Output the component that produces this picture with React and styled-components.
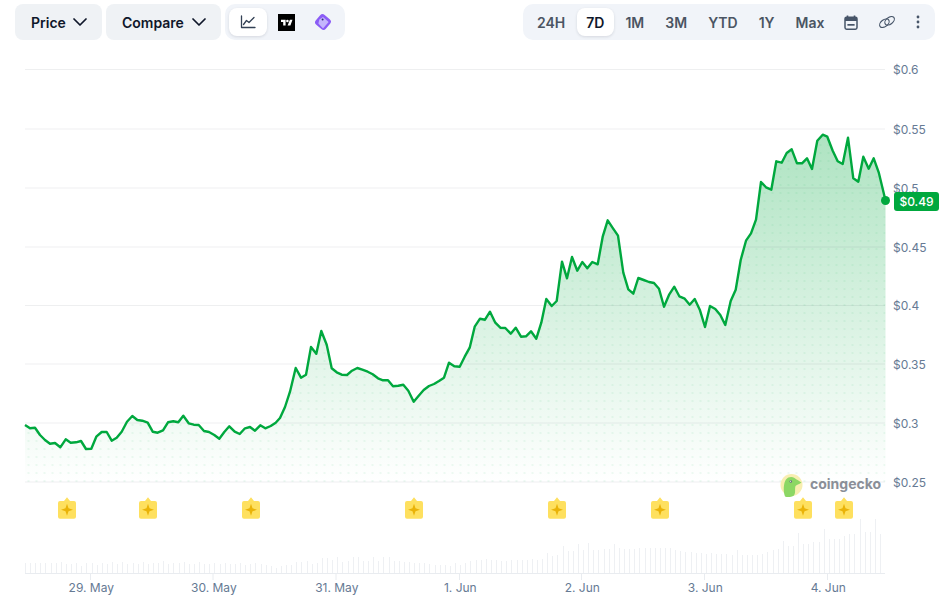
import React from "react";
import styled, { createGlobalStyle } from "styled-components";
import { ChevronDown } from "lucide-react";

const GlobalStyle = createGlobalStyle`
  html, body { margin: 0; padding: 0; background: #fff; overflow: hidden; }
  body { font-family: Inter, "Liberation Sans", sans-serif; }
`;

const Page = styled.div`
  width: 946px;
  height: 601px;
  display: flex;
  flex-direction: column;
`;

const Toolbar = styled.div`
  display: flex;
  align-items: flex-start;
  gap: 4px;
  height: 36px;
  padding: 4px 11px 4px 15px;
`;

const Dropdown = styled.button`
  display: flex;
  align-items: center;
  justify-content: space-between;
  width: ${(p) => p.$width}px;
  height: 36px;
  padding: 0 10px 0 16px;
  border: 0;
  border-radius: 8px;
  background: #eff2f5;
  color: #0f172a;
  font: 600 14px Inter, sans-serif;
`;

const Segmented = styled.div`
  display: flex;
  align-items: center;
  height: 36px;
  padding: 0 ${(p) => p.$pad}px 0 4px;
  border-radius: 10px;
  background: #f1f4f9;
  gap: ${(p) => p.$gap || 0}px;
`;

const Spacer = styled.div`
  flex: 1;
`;

const IconTab = styled.button`
  display: flex;
  align-items: center;
  justify-content: center;
  width: ${(p) => p.$width}px;
  height: 28px;
  padding: 0;
  border: 0;
  border-radius: 8px;
  background: ${(p) => (p.$active ? "#fff" : "transparent")};
  box-shadow: ${(p) => (p.$active ? "0 1px 3px rgba(15,23,42,.12)" : "none")};
`;

const RangeTabs = styled.div`
  display: flex;
  gap: 2px;
  margin-right: 1.5px;
`;

const RangeTab = styled.button`
  height: 28px;
  padding: 0 9.5px;
  border: 0;
  border-radius: 8px;
  background: ${(p) => (p.$active ? "#fff" : "transparent")};
  box-shadow: ${(p) => (p.$active ? "0 1px 3px rgba(15,23,42,.12)" : "none")};
  color: ${(p) => (p.$active ? "#0f172a" : "#4b5563")};
  font: 600 14px Inter, sans-serif;
  white-space: nowrap;
`;

const ChartSvg = styled.svg`
  display: block;
  width: 946px;
  height: 557px;
`;

const AxisLabel = styled.text`
  font: 400 12px Inter, sans-serif;
  fill: #667a94;
`;

const BadgeText = styled.text`
  font: 500 12px Inter, sans-serif;
  fill: #fff;
`;

const Wordmark = styled.text`
  font: 700 14px Inter, sans-serif;
  fill: #8a8f98;
`;

const pts = [
  [25,425],[30,428.3],[35,427.7],[40,435],[45,440],[50,443.7],[55,443],[60.3,447.3],[65.7,439.3],[70.7,442.7],
  [76,442.3],[81,441],[86,449],[91.3,448.7],[96.3,436.7],[101.7,432],[106.7,432],[111.7,440.7],[116.7,437.7],[121.7,431.7],
  [127,421.7],[132.3,416],[137.3,420],[142.3,420.7],[147.7,422.7],[152.7,431.7],[157.7,432.7],[163,430.3],[168,422.3],[173.3,421.3],
  [178.3,422.3],[183.3,415.7],[188.7,423.3],[193.7,424.7],[198.7,425],[204,431],[209,432],[214.3,435],[219.3,438.7],[224.3,432],
  [229.3,426.3],[234.7,431.7],[239.7,434],[245,428.3],[250,427],[255,430.7],[260.3,425.3],[265.3,428.3],[270.7,426],[275.7,422.7],
  [280,418],[285,407],[290,391.7],[295.7,368],[301,377.7],[306,374.7],[311,347],[316.3,353.7],[321.3,331],[326.7,344.7],
  [331.7,368.3],[336.7,372.3],[341.7,374.7],[347,375],[352,370.7],[357.3,368],[362.3,369.7],[367.7,371.7],[372.7,374.3],[378,378.3],
  [383,380.3],[388,380.3],[393,386.3],[398.3,385.7],[403.3,384.7],[408.3,390.7],[413.7,401.7],[418.7,395.7],[423.7,390],[429,386],
  [434,384],[439,381],[444,377.7],[449,362.7],[454.3,366.3],[459.7,366.7],[464.7,356.7],[469.7,347.7],[474.7,326.7],[480,318.7],
  [485,319.7],[490,311.7],[495.3,322.7],[500.3,327.7],[505.3,328],[510.7,333.7],[515.7,327.7],[521,336.7],[526,336.3],[531,331.3],
  [536.3,338.7],[541.3,322.7],[546.3,299],[551.7,306],[556.7,301],[562,261.7],[567,278.3],[572,257],[577.3,270.7],[582.3,262],
  [587.3,268.3],[592.3,262],[597.7,264.3],[602.7,236.7],[607.7,220.3],[613,228.3],[618,235.7],[623.3,272.7],[628.3,289.3],[633.3,293.7],
  [638.3,278],[643.7,280],[649,282],[654,283],[659,288.7],[664,306.7],[669.3,294.3],[674.3,286.7],[679.3,296.3],[684.7,298.7],
  [689.7,304.7],[694.7,299],[700,310.3],[705,327],[710,306],[715.3,309],[720.3,315],[725.3,325],[730.7,301],[735.7,289.7],
  [740.7,260],[746,240.7],[751,233.3],[756,219.6],[761,182],[766,187.3],[771.3,189.7],[776.3,161.3],[781.7,162.7],[786.7,153],
  [791.7,149.3],[797,163.3],[802,163.3],[807,158.3],[812,169],[817.3,140.7],[822.7,134.7],[827.3,136.7],[832.7,150.7],[837.7,161.3],
  [842.7,164],[848,137.7],[853.3,178.3],[858.3,181.7],[863.3,156.7],[868.7,168.7],[873.7,158.3],[878.7,172.3],[885.5,200.5],
];

const linePath = "M" + pts.map((p) => p.join(" ")).join("L");
const areaPath = `${linePath}L885.5 482L25 482Z`;

const volumes = [
  10,10,10,10,10,10,10,11,9,9,10,7,10,10,8,10,9,11,9,11,9,10,9,11,9,10,10,12,9,10,10,11,9,9,11,9,9,10,9,10,9,9,10,8,9,10,9,8,
  7,5,7,8,8,11,11,12,9,10,15,15,13,16,11,12,16,16,12,12,16,12,16,16,12,12,11,11,10,10,10,9,8,8,8,7,10,8,10,12,13,13,14,
  13,13,
  12,12,13,13,13,13,14,13,14,20,17,18,27,22,22,29,23,30,23,23,24,24,29,25,24,24,24,25,25,25,25,25,25,25,23,22,21,21,20,
  20,19,20,19,19,19,18,23,18,18,18,18,19,21,23,24,32,27,27,40,29,29,31,31,44,34,34,34,37,39,39,54,41,41,54,39,
];

const grid = [
  [69.5, "$0.6"],[129, "$0.55"],[188, "$0.5"],[247, "$0.45"],
  [305.5, "$0.4"],[364, "$0.35"],[423, "$0.3"],[482, "$0.25"],
];

const dates = [
  [90.5, "29. May"],[213, "30. May"],[336, "31. May"],[459.5, "1. Jun"],
  [581.5, "2. Jun"],[704.5, "3. Jun"],[827.5, "4. Jun"],
];

const markerXs = [67, 148, 251, 414, 557, 660, 803, 844];

const LineChartIcon = () => (
  <svg width="16" height="14" viewBox="0 0 16 14" fill="none" stroke="#334155" strokeWidth="1.3" strokeLinecap="round" strokeLinejoin="round">
    <path d="M1.5 1v11.5h13.5" />
    <path d="M3.5 9.5 6.5 5.5l2.5 2 5-5" />
  </svg>
);

const TradingViewIcon = () => (
  <svg width="17" height="17" viewBox="0 0 17 17">
    <rect width="17" height="17" fill="#000" />
    <path fill="#fff" d="M7.6 11.6H5.2V8H3V5.7h4.6zM12.4 11.6H9.6l2.3-5.9h2.6z" />
    <circle cx="9.4" cy="7" r="1.3" fill="#fff" />
  </svg>
);

const GemIcon = () => (
  <svg width="18" height="18" viewBox="0 0 18 18">
    <rect x="2.5" y="2.5" width="13" height="13" rx="3.2" fill="#8b5cf6" transform="rotate(40 9 9)" />
    <path d="M9 4 14.6 9 9 15.6 4.4 10.4 5.4 6.6z" fill="#c4b5fd" />
    <circle cx="8.6" cy="6.4" r="1" fill="#312e81" />
  </svg>
);

const CalendarIcon = () => (
  <svg width="14" height="15" viewBox="0 0 14 15" fill="none">
    <path d="M3.5 .5v2.5M10.5 .5v2.5" stroke="#475569" strokeWidth="1.6" />
    <rect x="1" y="2.2" width="12" height="12" rx="1.6" stroke="#475569" strokeWidth="1.5" />
    <rect x="1" y="2.2" width="12" height="3.8" fill="#475569" />
    <rect x="3.4" y="9" width="7.2" height="1.7" fill="#475569" />
  </svg>
);

const LinkIcon = () => (
  <svg width="18" height="14" viewBox="0 0 18 14" fill="none" stroke="#475569" strokeWidth="1.15">
    <ellipse cx="6.4" cy="8.2" rx="5.4" ry="3.4" transform="rotate(-38 6.4 8.2)" />
    <ellipse cx="11.6" cy="5.8" rx="5.4" ry="3.4" transform="rotate(-38 11.6 5.8)" />
  </svg>
);

const DotsIcon = () => (
  <svg width="4" height="14" viewBox="0 0 4 14" fill="#475569">
    <circle cx="2" cy="2" r="1.4" />
    <circle cx="2" cy="7" r="1.4" />
    <circle cx="2" cy="12" r="1.4" />
  </svg>
);

const Marker = ({ x }) => (
  <g transform={`translate(${x} 0)`}>
    <path
      d="M-7 501H-3L0 497.3 3 501H7A2 2 0 0 1 9 503V516.7A2 2 0 0 1 7 518.7H-7A2 2 0 0 1 -9 516.7V503A2 2 0 0 1 -7 501Z"
      fill="#fee05f"
    />
    <path d="M0 503.8 1.5 508.3 6 509.8 1.5 511.3 0 515.8-1.5 511.3-6 509.8-1.5 508.3Z" fill="#eab308" />
  </g>
);

const GeckoLogo = () => (
  <g>
    <circle cx="791.5" cy="485" r="11" fill="#f8eeb0" />
    <path
      d="M785 496.5C783 491 783.5 483 786 479.5 788 476.8 792 476.3 794.5 478 796.5 479.5 799.5 481.2 801.5 482.5 799 484.5 796.5 484.8 795.5 486 794.5 489 796 492.5 794 495.5 791 497.3 787.5 497.5 785 496.5Z"
      fill="#8cd764"
    />
    <circle cx="790.8" cy="481.5" r="1.3" fill="#6b7280" />
    <circle cx="790.5" cy="481.2" r=".5" fill="#fff" />
    <Wordmark x="810" y="489">coingecko</Wordmark>
  </g>
);

const ranges = ["24H", "7D", "1M", "3M", "YTD", "1Y", "Max"];

export default function App() {
  return (
    <Page>
      <GlobalStyle />
      <Toolbar>
        <Dropdown $width={87}>Price<ChevronDown size={24} strokeWidth={1.75} /></Dropdown>
        <Dropdown $width={115}>Compare<ChevronDown size={24} strokeWidth={1.75} /></Dropdown>
        <Segmented $pad={4}>
          <IconTab $width={38} $active><LineChartIcon /></IconTab>
          <IconTab $width={38}><TradingViewIcon /></IconTab>
          <IconTab $width={36}><GemIcon /></IconTab>
        </Segmented>
        <Spacer />
        <Segmented $gap={2} $pad={9.5}>
          <RangeTabs>
            {ranges.map((r) => (
              <RangeTab key={r} $active={r === "7D"}>{r}</RangeTab>
            ))}
          </RangeTabs>
          <IconTab $width={26}><CalendarIcon /></IconTab>
          <IconTab $width={42}><LinkIcon /></IconTab>
          <IconTab $width={16}><DotsIcon /></IconTab>
        </Segmented>
      </Toolbar>
      <ChartSvg viewBox="0 44 946 557">
        <defs>
          <linearGradient id="areaFade" gradientUnits="userSpaceOnUse" x1="0" y1="134" x2="0" y2="482">
            <stop offset="0" stopColor="#00a83e" stopOpacity=".32" />
            <stop offset="1" stopColor="#00a83e" stopOpacity="0" />
          </linearGradient>
          <pattern id="areaDots" patternUnits="userSpaceOnUse" x="24.5" y="437" width="8" height="8">
            <circle cx="4" cy="4" r="1.1" fill="#00a83e" fillOpacity=".08" />
          </pattern>
        </defs>

        <path d={areaPath} fill="url(#areaFade)" />
        <path d={areaPath} fill="url(#areaDots)" />

        {grid.map(([y, label]) => (
          <g key={label}>
            <line x1="25" x2="885" y1={y} y2={y} stroke="#1e293b" strokeOpacity=".075" />
            <AxisLabel x="893" y={y + 4.5}>{label}</AxisLabel>
          </g>
        ))}

        {volumes.map((h, i) => {
          const x = Math.round(25 + 5.12 * i) + 0.5;
          return <line key={i} x1={x} x2={x} y1={573} y2={573 - h} stroke="#eef0f3" />;
        })}

        <line x1="25" x2="885" y1="573.5" y2="573.5" stroke="#e9ecf0" />
        {dates.map(([x, label]) => (
          <g key={label}>
            <line x1={x} x2={x} y1="574" y2="580" stroke="#e9ecf0" />
            <AxisLabel x={x + 0.8} y="592" textAnchor="middle">{label}</AxisLabel>
          </g>
        ))}

        <path d={linePath} fill="none" stroke="#00a83e" strokeWidth="2.4" strokeLinejoin="round" />
        <circle cx="885.5" cy="200.5" r="4.5" fill="#00a83e" />

        <rect x="894" y="192" width="45" height="19" rx="3" fill="#00a83e" />
        <BadgeText x="916.5" y="206" textAnchor="middle">$0.49</BadgeText>

        <GeckoLogo />
        {markerXs.map((x) => <Marker key={x} x={x} />)}
      </ChartSvg>
    </Page>
  );
}
